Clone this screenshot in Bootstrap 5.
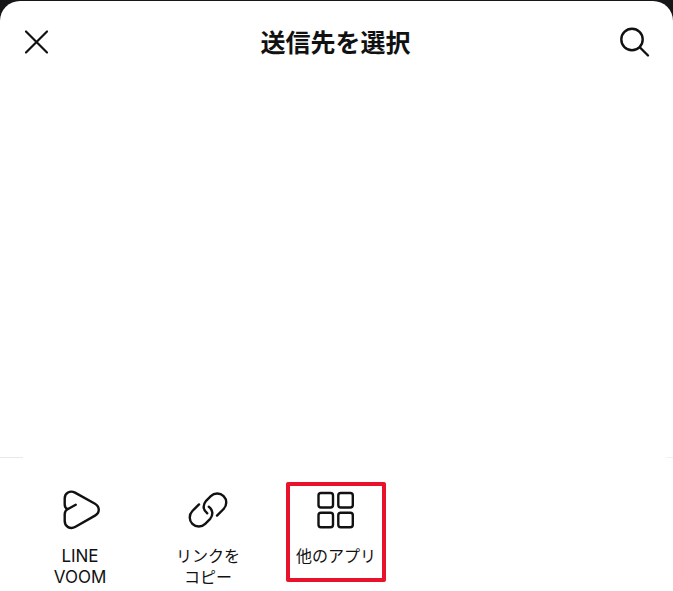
<!DOCTYPE html>
<html lang="ja">
<head>
<meta charset="utf-8">
<meta name="viewport" content="width=device-width, initial-scale=1">
<title>送信先を選択</title>
<link href="https://cdn.jsdelivr.net/npm/bootstrap@5.3.0/dist/css/bootstrap.min.css" rel="stylesheet">
<style>
  body { background: #161618; color: #111; font-family: Inter, "Noto Sans CJK JP", sans-serif; }
  .sheet { background: #fff; border-radius: 20px 20px 0 0; margin-top: 1px; min-height: calc(100vh - 1px); }
  .sheet-bar { padding: 24px 22px; }
  .sheet-title { font-size: 25px; line-height: 36px; font-weight: 600; }
  .icon-btn { color: #111; line-height: 0; }
  svg { display: block; flex: none; fill: none; stroke: currentColor; stroke-linecap: round; stroke-linejoin: round; }
  .rule-start { width: 23px; height: 1px; background: #e9e9e9; }
  .rule-end { width: 7px; height: 1px; background: #f1f1f1; }
  .share-row { padding: 24px 16px 0; min-height: 133px; }
  .share-slot { width: 128px; }
  .share-btn { width: 100px; min-height: 100px; border: 0; border-radius: 2px; background: none; color: #111; font-size: 16px; line-height: 21px; padding: 7px 0 0; }
  .share-btn.picked { box-shadow: inset 0 0 0 4px #e8132b; }
  .share-label { margin-top: 15px; white-space: nowrap; }
  .latin { font-size: 17px; }
</style>
</head>
<body>
<main class="sheet d-flex flex-column">
  <header class="sheet-bar d-flex align-items-center justify-content-between">
    <button type="button" class="icon-btn btn p-0 border-0" aria-label="閉じる">
      <svg width="30" height="30" viewBox="0 0 30 30" stroke-width="2.2"><path d="M4 3.5 25 24.5M25 3.5 4 24.5"/></svg>
    </button>
    <h1 class="sheet-title m-0">送信先を選択</h1>
    <button type="button" class="icon-btn btn p-0 border-0" aria-label="検索">
      <svg width="32" height="32" viewBox="0 0 32 32" stroke-width="2.4"><circle cx="13" cy="12.5" r="10.7"/><path d="M21 20.5 29 28.5"/></svg>
    </button>
  </header>
  <section class="flex-grow-1"></section>
  <footer>
    <div class="d-flex justify-content-between"><div class="rule-start"></div><div class="rule-end"></div></div>
    <div class="share-row d-flex">
      <div class="share-slot d-flex justify-content-center align-items-start">
        <button type="button" class="share-btn d-flex flex-column align-items-center">
          <svg width="42" height="42" viewBox="0 1 42 42" stroke-width="2.4"><path d="M16.7 16.8 8.6 21.2C6.7 20.3 5.7 18.7 5.7 16.5V10.5C5.7 5 11 2 16 4.6L36 15.8C41 18.7 41 24.8 36 27.6L16.5 38.8C11 41.8 5.7 38.5 5.7 33V26.3C5.7 23.8 6.6 22.2 8.6 21.2"/></svg>
          <span class="share-label latin">LINE<br>VOOM</span>
        </button>
      </div>
      <div class="share-slot d-flex justify-content-center align-items-start">
        <button type="button" class="share-btn d-flex flex-column align-items-center">
          <svg width="42" height="42" viewBox="-1 -1 42 42" stroke-width="2.4"><path d="M11 14.4 4.4 21A9 9 0 0 0 17.2 33.8L22.2 28.8C25.3 25.2 25.2 20 20.8 16.7"/><path d="M29 25.6 35.6 19A9 9 0 0 0 22.8 6.2L17.8 11.2C14.7 14.8 14.8 20 19.2 23.3"/></svg>
          <span class="share-label">リンクを<br>コピー</span>
        </button>
      </div>
      <div class="share-slot d-flex justify-content-center align-items-start">
        <button type="button" class="share-btn picked d-flex flex-column align-items-center">
          <svg width="42" height="42" viewBox="0.5 0.5 42 42" stroke-width="2.4"><rect x="4" y="4.5" width="14.5" height="14.5" rx="2.5"/><rect x="23.8" y="4.5" width="14.5" height="14.5" rx="2.5"/><rect x="4" y="24.3" width="14.5" height="14.5" rx="2.5"/><rect x="23.8" y="24.3" width="14.5" height="14.5" rx="2.5"/></svg>
          <span class="share-label">他のアプリ</span>
        </button>
      </div>
    </div>
  </footer>
</main>
<script src="https://cdn.jsdelivr.net/npm/bootstrap@5.3.0/dist/js/bootstrap.bundle.min.js"></script>
</body>
</html>
